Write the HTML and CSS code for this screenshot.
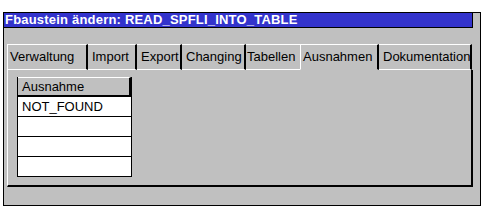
FILE: index.html
```html
<!DOCTYPE html>
<html>
<head>
    <title>Fbaustein ändern</title>
    <link rel="stylesheet" href="styles.css">
</head>
<body>
    <div class="window">
        <div class="titlebar">Fbaustein ändern: READ_SPFLI_INTO_TABLE</div>

        <div class="tabs">
            <div class="tab first">Verwaltung</div>
            <div class="tab">Import</div>
            <div class="tab">Export</div>
            <div class="tab">Changing</div>
            <div class="tab before-active">Tabellen</div>
            <div class="tab active">Ausnahmen</div>
            <div class="tab">Dokumentation</div>
        </div>

        <div class="panel">
            <div class="grid">
                <div class="grid-head">Ausnahme</div>
                <div class="grid-row">NOT_FOUND</div>
                <div class="grid-row"></div>
                <div class="grid-row"></div>
                <div class="grid-row"></div>
            </div>
        </div>
    </div>
</body>
</html>
```

FILE: styles.css
```css
body {
    margin: 0;
    background: #ffffff;
    font-family: "Liberation Sans", Arial, sans-serif;
    font-size: 13px;
    color: #000000;
}
.window {
    box-sizing: border-box;
    width: 478px;
    height: 194px;
    margin: 12px 0 0 3px;
    border: 1px solid #000000;
    background: #c0c0c0;
}
.titlebar {
    box-sizing: border-box;
    width: 469px;
    height: 15px;
    padding-left: 1px;
    background: #3333cc;
    border-right: 1px solid #000000;
    border-bottom: 1px solid #000000;
    color: #ffffff;
    font-weight: bold;
    letter-spacing: 0.2px;
    line-height: 14px;
    white-space: nowrap;
}

/* Reiter */
.tabs {
    display: grid;
    grid-template-columns: 81px 49px 45px 64px 54px 79px 93px;
    margin: 16px 0 0 3px;
}
.tab {
    box-sizing: border-box;
    height: 26px;
    padding-left: 3px;
    border-top: 1px solid #ffffff;
    border-bottom: 1px solid #ffffff;
    border-right: 2px solid #000000;
    line-height: 23px;
    white-space: nowrap;
}
.tab.first { border-left: 1px solid #ffffff; padding-left: 2px; }
.tab + .tab { padding-left: 4px; }
.tab.before-active { border-right: none; padding-left: 1px; }
.tab.active {
    border-left: 1px solid #ffffff;
    border-bottom-color: #c0c0c0;
    padding-left: 2px;
}

.panel {
    box-sizing: border-box;
    width: 466px;
    height: 117px;
    margin-left: 3px;
    padding: 7px 0 0 9px;
    border-left: 1px solid #ffffff;
    border-right: 2px solid #000000;
    border-bottom: 2px solid #000000;
}

/* Tabelle */
.grid {
    width: 113px;
    border-left: 1px solid #000000;
    border-right: 1px solid #000000;
}
.grid-head {
    box-sizing: border-box;
    height: 20px;
    padding-left: 4px;
    border-top: 1px solid #ffffff;
    border-right: 2px solid #000000;
    border-bottom: 2px solid #000000;
    line-height: 17px;
}
.grid-row {
    box-sizing: border-box;
    height: 20px;
    padding-left: 4px;
    background: #ffffff;
    border-bottom: 1px solid #000000;
    line-height: 19px;
}
```
